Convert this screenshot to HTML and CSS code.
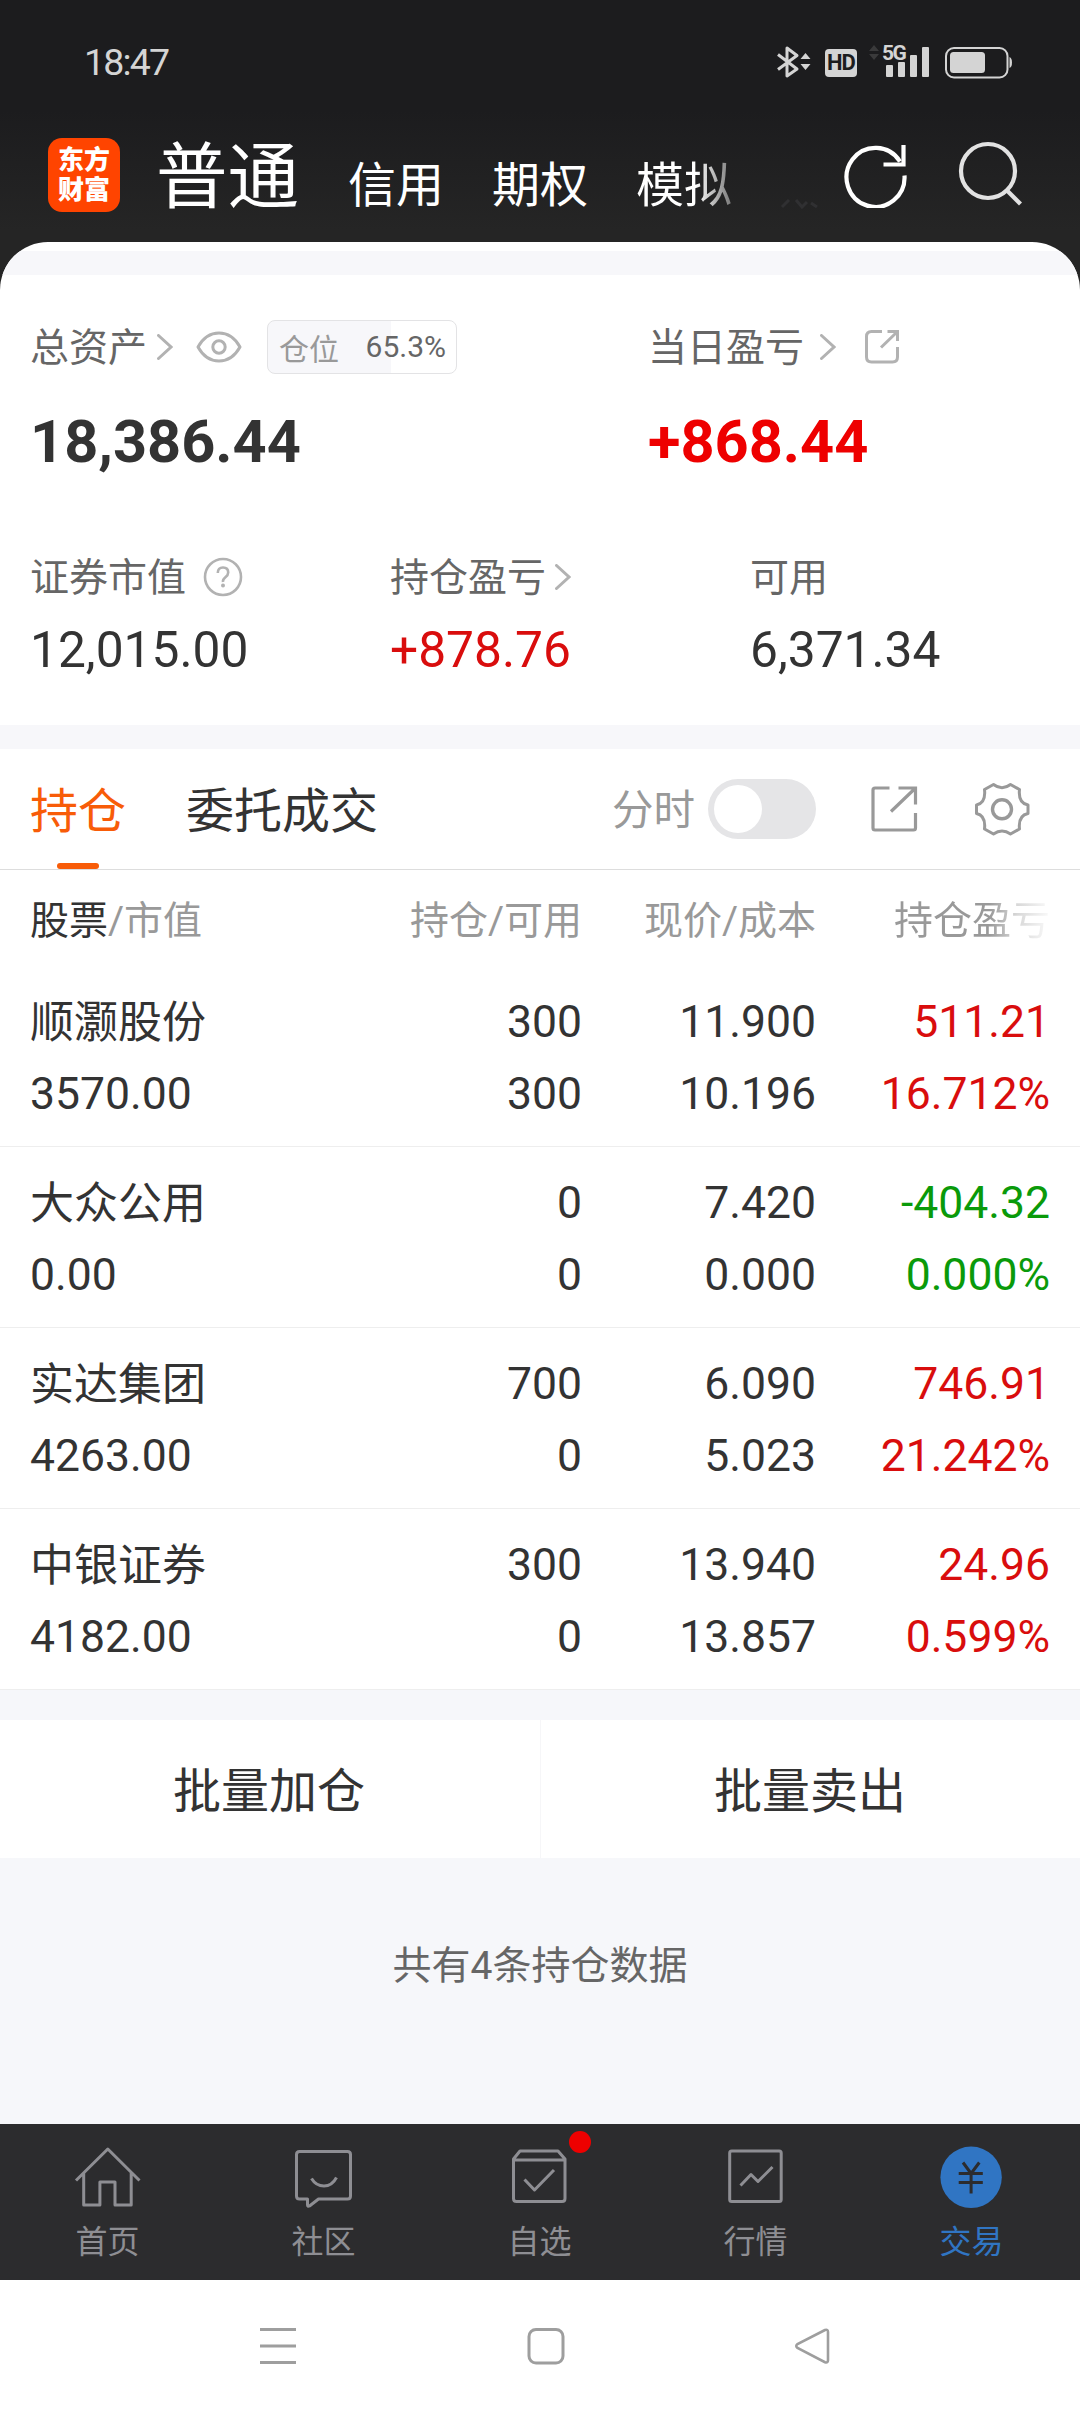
FILE: index.html
```html
<!DOCTYPE html>
<html lang="zh-CN">
<head>
<meta charset="utf-8">
<title>交易</title>
<link rel="stylesheet" href="styles.css">
</head>
<body>
<div class="phone">
  <header class="top">
    <div class="status">
      <span class="clock">18:47</span>
      <div class="status-icons">
        <svg class="ic-bt" width="34" height="34" viewBox="0 0 34 34" fill="none" stroke="#d4d4d4" stroke-width="3" stroke-linejoin="round"><path d="M1 9.500 20 24 10 31V3L20 10.500 1 24.500"/><path d="M28.500 8l5 6h-10zM28.500 25l5-6h-10z" fill="#d4d4d4" stroke="none"/></svg>
        <span class="hd">HD</span>
        <svg class="ic-updown" width="10" height="34" viewBox="0 0 10 34" fill="#3a3a3b"><path d="M5 0l5 6H0zM5 15l5-6H0z"/></svg>
        <div class="signal">
          <svg width="44" height="34" viewBox="0 0 44 34" fill="#d4d4d4"><rect x="0" y="20" width="7" height="12" rx="1"/><rect x="12" y="17" width="7" height="15" rx="1"/><rect x="24" y="10" width="7" height="22" rx="1"/><rect x="36" y="2" width="7" height="30" rx="1"/></svg>
          <span class="net">5G</span>
        </div>
        <svg class="ic-battery" width="68" height="32" viewBox="0 0 68 32"><rect x="1" y="1" width="61.500" height="29.500" rx="8" fill="none" stroke="#d4d4d4" stroke-width="2"/><rect x="5" y="5" width="35" height="21" rx="3.500" fill="#d4d4d4"/><path d="M64.500 10q2.500 1 2.500 5.500t-2.500 5.500z" fill="#d4d4d4"/></svg>
      </div>
    </div>
    <div class="bar">
      <div class="logo"><span>东方</span><span>财富</span></div>
      <nav class="modes">
        <span class="mode mode-on">普通</span>
        <span class="mode">信用</span>
        <span class="mode">期权</span>
        <span class="mode mode-fade">模拟</span>
      </nav>
      <svg class="more" width="38" height="10" viewBox="0 0 38 10" fill="none" stroke="#303032" stroke-width="3"><path d="M2 8 9 1M16 1l6 7 5-5M31 4l6 4"/></svg>
      <svg class="ic-refresh" width="64" height="66" viewBox="0 0 64 66" fill="none" stroke="#fff" stroke-width="4.200"><path d="M60.500 33.500A29 29.500 0 1 1 56 19.500"/><path d="M59.500 3v19.500H39.500"/></svg>
      <svg class="ic-search" width="64" height="66" viewBox="0 0 64 66" fill="none" stroke="#e2e2e2" stroke-width="4.200"><circle cx="30" cy="30" r="27"/><path d="M48.500 49 62.500 63"/></svg>
    </div>
  </header>

  <main class="sheet">
    <div class="strip"></div>
    <section class="account">
      <div class="row lead">
        <div class="cell total">
          <div class="label"><span class="cap">总资产</span><svg class="chev" width="16" height="26" viewBox="0 0 16 26"><path d="M1.500 1.500 14 13 1.500 24.500"/></svg>
            <svg class="eye" width="46" height="32" viewBox="0 0 46 32" fill="none" stroke="#b2b2b2" stroke-width="3"><path d="M2 16C7 7 14 2 23 2s16 5 21 14C39 25 32 30 23 30S7 25 2 16z" stroke-linejoin="round"/><circle cx="23" cy="16" r="6.200"/></svg>
            <span class="pill"><span class="pill-name">仓位</span><span class="pill-num">65.3%</span></span>
          </div>
          <div class="big">18,386.44</div>
        </div>
        <div class="cell">
          <div class="label"><span class="cap">当日盈亏</span><svg class="chev chev-far" width="16" height="26" viewBox="0 0 16 26"><path d="M1.500 1.500 14 13 1.500 24.500"/></svg>
            <svg class="share-sm" width="36" height="36" viewBox="0 0 36 36" fill="none" stroke="#b2b2b2" stroke-width="3"><path d="M18 2.500H7.500q-5 0-5 5v20.500q0 5 5 5h21q5 0 5-5V18M23.500 2.500h10V12M33 3 17 18.500"/></svg>
          </div>
          <div class="big up-strong">+868.44</div>
        </div>
      </div>
      <div class="row detail">
        <div class="cell">
          <div class="label"><span class="cap">证券市值</span><svg class="help" width="40" height="40" viewBox="0 0 40 40" fill="none" stroke="#b2b2b2" stroke-width="2.600"><circle cx="20" cy="20" r="18"/><path d="M14.800 16q0-5.500 5.200-5.500t5.200 5q0 2.500-2.800 4.800t-2.400 4.700"/><circle cx="20" cy="28.500" r="2" fill="#b2b2b2" stroke="none"/></svg></div>
          <div class="num">12,015.00</div>
        </div>
        <div class="cell">
          <div class="label"><span class="cap">持仓盈亏</span><svg class="chev chev-near" width="16" height="26" viewBox="0 0 16 26"><path d="M1.500 1.500 14 13 1.500 24.500"/></svg></div>
          <div class="num up">+878.76</div>
        </div>
        <div class="cell">
          <div class="label"><span class="cap">可用</span></div>
          <div class="num">6,371.34</div>
        </div>
      </div>
    </section>
    <div class="strip"></div>

    <section class="holdings">
      <div class="tabs">
        <span class="tab tab-on">持仓</span>
        <span class="tab">委托成交</span>
        <div class="tools">
          <span class="tool-text">分时</span>
          <span class="switch"><span class="knob"></span></span>
          <svg class="share" width="48" height="48" viewBox="0 0 48 48" fill="none" stroke="#999" stroke-width="3.200"><path d="M19.500 3H5Q3 3 3 5v38q0 2 2 2h38.500q2 0 2-2V28M28.500 3h17v16.500M45 3.500 21 26.500"/></svg>
          <svg class="gear" width="60" height="60" viewBox="0 0 60 60" fill="none" stroke="#999" stroke-width="3" stroke-linejoin="round"><path d="M21.500 5.500Q30 12 38.500 5.500L47.500 10.500Q46 24 56 26V34.500Q46 36.500 47.500 50L38.500 55Q30 49 21.500 55L12.500 50Q14 36.500 4.500 34.500V26Q14 24 12.500 10.500Z"/><circle cx="30" cy="30.300" r="9.500" stroke-width="3.400"/></svg>
        </div>
      </div>
      <div class="grid head">
        <span><b>股票</b>/市值</span><span>持仓/可用</span><span>现价/成本</span><span class="head-fade">持仓盈亏</span>
      </div>
      <div class="grid item">
        <span class="name">顺灏股份</span><span>300</span><span>11.900</span><span class="up">511.21</span>
        <span>3570.00</span><span>300</span><span>10.196</span><span class="up">16.712%</span>
      </div>
      <div class="grid item">
        <span class="name">大众公用</span><span>0</span><span>7.420</span><span class="down">-404.32</span>
        <span>0.00</span><span>0</span><span>0.000</span><span class="down">0.000%</span>
      </div>
      <div class="grid item">
        <span class="name">实达集团</span><span>700</span><span>6.090</span><span class="up">746.91</span>
        <span>4263.00</span><span>0</span><span>5.023</span><span class="up">21.242%</span>
      </div>
      <div class="grid item">
        <span class="name">中银证券</span><span>300</span><span>13.940</span><span class="up">24.96</span>
        <span>4182.00</span><span>0</span><span>13.857</span><span class="up">0.599%</span>
      </div>
    </section>

    <div class="batch">
      <span class="batch-btn">批量加仓</span>
      <span class="batch-btn">批量卖出</span>
    </div>
    <p class="count">共有4条持仓数据</p>
  </main>

  <nav class="dock">
    <div class="dock-item">
      <svg width="72" height="72" viewBox="0 0 72 72"><path d="M4 38.500 35.800 7 67.500 38.500M11.700 31v32h16.200V40H43v23h16.200V31"/></svg>
      <span>首页</span>
    </div>
    <div class="dock-item">
      <svg width="72" height="72" viewBox="0 0 72 72"><path d="M11.500 9.500h48q3 0 3 3V54q0 3-3 3H30.500L21.500 64q-2 1-2-1V57h-8q-3 0-3-3V12.500q0-3 3-3z"/><path d="M23.500 36.500q4.500 7.500 12.500 7.500t12.500-8.500"/></svg>
      <span>社区</span>
    </div>
    <div class="dock-item">
      <svg width="72" height="72" viewBox="0 0 72 72"><path d="M9.500 17 16 9H54L61 17V56.500q0 3-3 3H12.500q-3 0-3-3zM9.500 18H61M20.500 37.500 30.500 48 50 28"/></svg>
      <i class="dot"></i>
      <span>自选</span>
    </div>
    <div class="dock-item">
      <svg width="72" height="72" viewBox="0 0 72 72"><rect x="9.700" y="9" width="51.500" height="50.500" rx="2"/><path d="M20.500 43.500 31 32.500 38 39.500 52.500 25"/></svg>
      <span>行情</span>
    </div>
    <div class="dock-item dock-on">
      <svg width="72" height="72" viewBox="0 0 72 72"><circle cx="35.100" cy="35.300" r="30.700" fill="#3075c3" stroke="none"/><path d="M27 20.500 35.100 31.500 43.300 20.500M22.700 31.500H46.800M22.700 40.500H46.800M35.100 31v20.500" stroke="#2c2c2e"/></svg>
      <span>交易</span>
    </div>
  </nav>

  <div class="sysnav">
    <svg width="36" height="38" viewBox="0 0 36 38"><path d="M0 2.500H36M0 19H36M0 35.500H36"/></svg>
    <svg width="38" height="38" viewBox="0 0 38 38"><rect x="2" y="2.500" width="34" height="33.500" rx="7"/></svg>
    <svg width="37" height="38" viewBox="0 0 37 38"><path d="M31 3 3.500 17q-2.500 2 0 4L31 35.200q3 1 3-2V5q0-3-3-2z" stroke-width="2.600"/></svg>
  </div>
</div>
</body>
</html>
```
FILE: styles.css
```css
* { box-sizing: border-box; }
body {
  margin: 0;
  background: #fff;
  color: #333;
  font-family: Roboto, "Noto Sans CJK SC", sans-serif;
  font-weight: 400;
}
svg { display: block; flex: none; }
.phone { width: 1080px; height: 2412px; display: flex; flex-direction: column; }

/* header */
.top { height: 290px; flex: none; background: linear-gradient(#1c1c1e 0, #1c1c1e 110px, #252525 230px); }
.status { display: flex; justify-content: space-between; height: 124px; padding: 0 67px 0 84px; }
.clock { font-size: 37.500px; line-height: 44px; letter-spacing: -1.800px; margin-top: 40px; color: #d4d4d4; }
.status-icons { display: flex; align-items: flex-start; padding-top: 45px; }
.hd { margin: 4px 0 0 14px; width: 32px; height: 28px; border-radius: 4px; background: #d4d4d4; color: #1c1c1e; font-size: 22px; line-height: 28px; font-weight: 700; letter-spacing: -1px; text-align: center; }
.ic-updown { margin-left: 12px; }
.signal { position: relative; margin-left: 7px; }
.net { position: absolute; left: -4px; top: -2px; font-size: 21px; line-height: 21px; font-weight: 700; letter-spacing: -1.500px; color: #d4d4d4; background: #1c1c1e; height: 18px; }
.ic-battery { margin: 2px 0 0 15px; }

.bar { display: flex; align-items: flex-start; padding: 14px 57px 0 48px; }
.logo { width: 72px; height: 74px; flex: none; border-radius: 14px; background: #ff4400; color: #fff; display: flex; flex-direction: column; align-items: center; padding-top: 7px; font-size: 26px; line-height: 30px; font-weight: 900; }
.modes { display: flex; flex: none; align-items: baseline; gap: 48px; margin-left: 36px; padding-top: 2px; line-height: 76px; color: #fff; width: 624px; }
.mode { font-size: 48px; }
.mode-on { font-size: 71.500px; margin-right: 1px; }
.mode-fade { background: linear-gradient(90deg, #fff 62%, #777 100%); -webkit-background-clip: text; background-clip: text; color: transparent; }
.more { margin: 61px 0 0 0; }
.ic-refresh { margin: 4px 0 0 26px; }
.ic-search { margin: 3px 0 0 50px; }

/* sheet */
.sheet { height: 1882px; margin-top: -48px; flex: none; background: #fff; border-radius: 48px 48px 0 0; overflow: hidden; padding-top: 9px; }
.strip { height: 24px; background: #f7f7fa; }
.account { height: 450px; padding: 45px 0 0 30px; }
.row { display: grid; }
.lead { grid-template-columns: 618px 1fr; }
.detail { grid-template-columns: 360px 360px 1fr; margin-top: 73px; }
.label { display: flex; align-items: center; height: 54px; font-size: 39px; color: #666; }
.cap { height: 54px; line-height: 56px; }
.chev { margin-left: 10px; fill: none; stroke: #b2b2b2; stroke-width: 3; stroke-linecap: round; }
.chev-far { margin-left: 16px; }
.chev-near { margin-left: 9px; }
.eye { margin-left: 23px; }
.share-sm { margin-left: 28px; }
.help { margin-left: 17px; }
.pill { display: flex; align-items: center; justify-content: space-between; margin-left: 25px; width: 190px; height: 54px; padding: 0 10px 1px 11px; border: 1px solid #e3e3e5; border-radius: 8px; background: linear-gradient(90deg, #f7f7fa 65.300%, #fff 65.300%); font-size: 30px; }
.pill-name { color: #999; }
.big { margin-top: 33px; font-size: 59.500px; line-height: 70px; font-weight: 700; }
.num { margin-top: 16px; font-size: 49.700px; line-height: 60px; }
.up { color: #d90d0d; }
.up-strong { color: #ee0000; }
.down { color: #0a9a0a; }

/* holdings */
.tabs { display: flex; align-items: center; height: 121px; padding: 0 48px 0 30px; border-bottom: 1px solid #ddd; font-size: 48px; }
.tab { height: 120px; line-height: 126px; margin-right: 60px; }
.tab-on { position: relative; color: #f85c08; }
.tab-on::after { content: ""; position: absolute; left: 27px; bottom: 0; width: 42px; height: 6px; border-radius: 3px; background: #f85c08; }
.tools { display: flex; align-items: center; margin-left: auto; }
.tool-text { font-size: 41.500px; line-height: 60px; padding-top: 3px; color: #999; }
.switch { width: 108px; height: 60px; margin-left: 13px; padding: 6px; border-radius: 30px; background: #e5e5e7; }
.knob { display: block; width: 48px; height: 48px; border-radius: 50%; background: #fff; }
.share { margin-left: 54px; }
.gear { margin-left: 54px; }
.grid { display: grid; grid-template-columns: 302px 250px 234px 234px; padding: 0 30px; text-align: right; }
.grid > span:nth-child(4n+1) { text-align: left; }
.head { height: 96px; line-height: 102px; font-size: 39px; color: #999; }
.head b { font-weight: 400; color: #333; }
.head-fade { background: linear-gradient(90deg, #999 74%, #d8d8d8 86%, #fafafa 100%); -webkit-background-clip: text; background-clip: text; color: transparent; }
.item { height: 181px; padding-top: 20px; line-height: 72px; grid-auto-rows: 72px; font-size: 44.500px; border-bottom: 1px solid #eee; }
.name { font-size: 44px; line-height: 75px; }

/* batch actions */
.batch { display: grid; grid-template-columns: 1fr 1fr; border-top: 30px solid #f6f7fa; }
.batch-btn { height: 138px; line-height: 143px; padding-right: 2px; text-align: center; font-size: 48px; }
.batch-btn + .batch-btn { border-left: 1px solid #f6f6f8; padding-right: 1px; }
.count { margin: 0; height: 266px; background: #f6f7fa; padding-top: 83px; line-height: 50px; text-align: center; font-size: 39px; color: #666; }

/* bottom bars */
.dock { flex: none; height: 156px; background: #2c2c2e; display: grid; grid-template-columns: repeat(5, 1fr); padding-top: 18px; }
.dock-item { position: relative; display: flex; flex-direction: column; align-items: center; font-size: 32px; line-height: 40px; color: #8e8e93; }
.dock-item svg { fill: none; stroke: #8e8e93; stroke-width: 3; stroke-linejoin: round; }
.dock-item span { margin-top: 8px; padding-right: 1px; }
.dock-on { color: #3075c3; }
.dot { position: absolute; left: 137px; top: -11px; width: 22px; height: 22px; border-radius: 50%; background: #ee0000; }
.sysnav { flex: none; height: 132px; display: flex; padding: 47px 0 0 260px; }
.sysnav svg { fill: none; stroke: #9e9e9e; stroke-width: 3; }
.sysnav svg + svg { margin-left: 231px; }
.sysnav svg + svg + svg { margin-left: 229px; }
```
